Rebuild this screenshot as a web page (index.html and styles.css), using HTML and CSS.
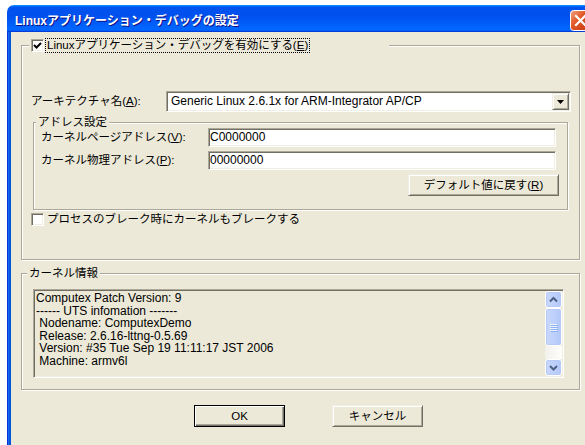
FILE: index.html
```html
<!DOCTYPE html>
<html lang="ja">
<head>
<meta charset="utf-8">
<title>Linuxアプリケーション・デバッグの設定</title>
<link rel="stylesheet" href="styles.css">
</head>
<body>
<div class="window">
  <div class="titlebar">
    <span class="title">Linuxアプリケーション・デバッグの設定</span>
    <span class="close">
      <svg width="21" height="21" viewBox="0 0 21 21">
        <defs>
          <linearGradient id="closeFill" x1="0" y1="0" x2="1" y2="1">
            <stop offset="0" stop-color="#F3A889"/>
            <stop offset="0.4" stop-color="#E2592B"/>
            <stop offset="1" stop-color="#C4390C"/>
          </linearGradient>
        </defs>
        <rect x="0.5" y="0.5" width="20" height="20" rx="3" fill="url(#closeFill)" stroke="#fff"/>
        <path d="M6 6 L15 15 M15 6 L6 15" stroke="#fff" stroke-width="2.2" stroke-linecap="square"/>
      </svg>
    </span>
  </div>
  <div class="frame">
    <div class="client">
      <fieldset class="group group-main">
        <legend class="legend-check">
          <span class="checkbox">
            <svg width="11" height="11" viewBox="0 0 11 11"><path d="M2 5 L4.5 7.5 L9 3" stroke="#000" stroke-width="2" fill="none"/></svg>
          </span>
          <span class="focus">Linuxアプリケーション・デバッグを有効にする(<u>E</u>)</span>
        </legend>

        <div class="row arch">
          <span class="label arch-label">アーキテクチャ名(<u>A</u>):</span>
          <div class="combo sunken">
            <span class="combo-text">Generic Linux 2.6.1x for ARM-Integrator AP/CP</span>
            <span class="combo-btn raised">
              <svg width="7" height="4" viewBox="0 0 7 4"><path d="M0 0 H7 L3.5 4 Z" fill="#000"/></svg>
            </span>
          </div>
        </div>

        <fieldset class="group group-addr">
          <legend class="legend-text legend-addr">アドレス設定</legend>
          <div class="row field">
            <span class="label field-label">カーネルページアドレス(<u>V</u>):</span>
            <div class="edit sunken">C0000000</div>
          </div>
          <div class="row field">
            <span class="label field-label">カーネル物理アドレス(<u>P</u>):</span>
            <div class="edit sunken">00000000</div>
          </div>
          <div class="row reset-row">
            <button class="btn raised btn-reset">デフォルト値に戻す(<u>R</u>)</button>
          </div>
        </fieldset>

        <div class="row check-row">
          <span class="checkbox"></span>
          <span class="check-label">プロセスのブレーク時にカーネルもブレークする</span>
        </div>
      </fieldset>

      <fieldset class="group group-info">
        <legend class="legend-text legend-info">カーネル情報</legend>
        <div class="textbox sunken">
          <div class="text-lines">Computex Patch Version: 9
------ UTS infomation -------
 Nodename: ComputexDemo
 Release: 2.6.16-lttng-0.5.69
 Version: #35 Tue Sep 19 11:11:17 JST 2006
 Machine: armv6l</div>
          <div class="vscroll">
            <div class="sb-btn">
              <svg width="15" height="15" viewBox="0 0 15 15"><path d="M4 9.5 L7.5 6 L11 9.5" stroke="#4D6185" stroke-width="2" fill="none"/></svg>
            </div>
            <div class="sb-thumb">
              <svg width="15" height="9" viewBox="0 0 15 9">
                <path d="M4 1.5 H11 M4 3.5 H11 M4 5.5 H11 M4 7.5 H11" stroke="#EEF4FE" stroke-width="1"/>
                <path d="M5 2.5 H12 M5 4.5 H12 M5 6.5 H12 M5 8.5 H12" stroke="#8CB0F8" stroke-width="1"/>
              </svg>
            </div>
            <div class="sb-track"></div>
            <div class="sb-btn">
              <svg width="15" height="15" viewBox="0 0 15 15"><path d="M4 6 L7.5 9.5 L11 6" stroke="#4D6185" stroke-width="2" fill="none"/></svg>
            </div>
          </div>
        </div>
      </fieldset>

      <div class="buttons">
        <button class="btn btn-default">OK</button>
        <button class="btn raised">キャンセル</button>
      </div>
    </div>
  </div>
</div>
</body>
</html>
```

FILE: styles.css
```css
* {
  box-sizing: border-box;
}

html,
body {
  margin: 0;
  padding: 0;
  background: #fff;
  overflow: hidden;
}

body {
  width: 585px;
  height: 445px;
  font: 11.5px/13px "Liberation Sans", "Noto Sans CJK JP", sans-serif;
  color: #000;
}

u {
  text-decoration: underline;
  text-underline-offset: 1px;
}

/* ---------- window chrome ---------- */
.window {
  margin: 5px 0 0 7px;
  width: 589px;
}

.titlebar {
  height: 27px;
  display: flex;
  align-items: flex-start;
  padding: 0 5px 0 8px;
  border-radius: 7px 7px 0 0;
  background: linear-gradient(180deg, #0997ff, #0053ee 8%, #0050ee 40%, #0066ff 88%, #0066ff 93%, #005bff 95%, #003dd7 96%, #003dd7);
}

.title {
  flex: 1;
  padding-top: 9px;
  color: #fff;
  font-weight: bold;
  font-size: 12px;
  line-height: 14px;
  white-space: nowrap;
  text-shadow: 1px 1px 0 #0f1089;
}

.close {
  flex: none;
  width: 21px;
  height: 21px;
  margin-top: 5px;
}

.close svg {
  display: block;
}

.frame {
  display: flex;
  padding-left: 4px;
  background: #0855dd;
  box-shadow: inset 1px 0 0 #0831d9, inset 2px 0 0 #166aee, inset 3px 0 0 #0855dd;
}

.client {
  flex: 1;
  height: 413px;
  background: #ece9d8;
  padding: 7px 0 0 5px;
}

/* ---------- shared control looks ---------- */
.sunken {
  border: 1px solid;
  border-color: #aca899 #fff #fff #aca899;
  box-shadow: inset 1px 1px 0 #716f64, inset -1px -1px 0 #f1efe2;
}

.raised {
  border: 1px solid;
  border-color: #f1efe2 #716f64 #716f64 #f1efe2;
  box-shadow: inset 1px 1px 0 #fff, inset -1px -1px 0 #aca899;
  background: #ece9d8;
}

.btn {
  font: inherit;
  color: #000;
  margin: 0;
  padding: 0;
  height: 22px;
  line-height: 18px;
}

.btn-default {
  border: 1px solid #000;
  background: #ece9d8;
  box-shadow: inset 1px 1px 0 #fff, inset -1px -1px 0 #716f64, inset -2px -2px 0 #aca899;
}

.checkbox {
  flex: none;
  width: 13px;
  height: 13px;
  display: flex;
  align-items: center;
  justify-content: center;
  background: #fff;
  border: 1px solid;
  border-color: #aca899 #fff #fff #aca899;
  box-shadow: inset 1px 1px 0 #716f64, inset -1px -1px 0 #f1efe2;
}

.checkbox svg {
  display: block;
}

/* ---------- group boxes ---------- */
.group {
  margin: 0;
  padding: 0;
  min-width: 0;
  border: 1px solid #aca899;
  box-shadow: inset 1px 1px 0 #fff, 1px 1px 0 #fff;
}

.group > legend {
  background: #ece9d8;
}

.legend-check {
  display: flex;
  align-items: center;
  width: 360px;
  height: 13px;
  margin-left: 7px;
  padding: 0 0 0 2px;
}

.focus {
  margin-left: 2px;
  padding: 0 1px;
  line-height: 13px;
  outline: 1px dotted #000;
  outline-offset: 0;
  white-space: nowrap;
}

.legend-text {
  padding: 0 2px;
  height: 12px;
  line-height: 12px;
}

/* captions sit near the left corner, ahead of the indented content */
.legend-addr {
  margin-left: -5px;
}

.legend-info {
  margin-left: -6px;
  height: 13px;
  line-height: 13px;
}

.group-main {
  width: 559px;
  margin-left: 5px;
  padding-bottom: 33px;
}

.row {
  display: flex;
  align-items: center;
}

.arch {
  margin-top: 39px;
  padding-left: 9px;
  height: 21px;
}

.arch-label {
  width: 135px;
  white-space: nowrap;
}

.combo {
  width: 405px;
  height: 21px;
  display: flex;
  align-items: center;
  background: #fff;
  padding: 1px 1px 1px 4px;
}

.combo-text {
  flex: 1;
  font: 12px/15px "Liberation Sans", sans-serif;
  white-space: nowrap;
}

.combo-btn {
  flex: none;
  width: 17px;
  height: 17px;
  display: flex;
  align-items: center;
  justify-content: center;
}

.combo-btn svg {
  display: block;
}

.group-addr {
  width: 535px;
  margin: 4px 0 0 11px;
  padding: 0 0 13px 7px;
}

.field {
  height: 19px;
  margin-bottom: 4px;
}

.field-label {
  width: 167px;
  white-space: nowrap;
}

.edit {
  width: 348px;
  height: 19px;
  background: #fff;
  padding: 0 0 0 1px;
  font: 12px/17px "Liberation Sans", sans-serif;
}

.reset-row {
  margin-top: 3px;
  padding-left: 367px;
}

.btn-reset {
  width: 151px;
}

.check-row {
  margin-top: 3px;
  padding-left: 9px;
  height: 13px;
}

.check-label {
  margin-left: 3px;
  white-space: nowrap;
}

.group-info {
  width: 559px;
  margin: 7px 0 0 5px;
  padding: 0 0 11px 11px;
}

.textbox {
  width: 531px;
  height: 89px;
  margin-top: 9px;
  display: flex;
  background: #ece9d8;
  padding: 1px 1px 1px 2px;
}

.text-lines {
  flex: 1;
  white-space: pre;
  font: 12px/12.5px "Liberation Sans", sans-serif;
  padding-top: 1px;
}

/* ---------- vertical scroll bar ---------- */
.vscroll {
  flex: none;
  width: 17px;
  display: flex;
  flex-direction: column;
}

.sb-btn,
.sb-thumb {
  flex: none;
  display: flex;
  align-items: center;
  justify-content: center;
  border: 1px solid #fff;
  border-radius: 3px;
  background: linear-gradient(90deg, #c9d8fc, #bccffb 60%, #b2c7f7);
  box-shadow: inset 0 0 0 1px #b7caf5;
}

.sb-btn {
  height: 17px;
}

.sb-thumb {
  height: 38px;
}

.sb-btn svg,
.sb-thumb svg {
  display: block;
}

.sb-track {
  flex: 1;
  background: linear-gradient(90deg, #f3f1ec, #fefefb);
}

/* ---------- dialog buttons ---------- */
.buttons {
  display: flex;
  gap: 47px;
  margin-top: 15px;
  padding-left: 178px;
}

.buttons .btn {
  width: 91px;
}
```
